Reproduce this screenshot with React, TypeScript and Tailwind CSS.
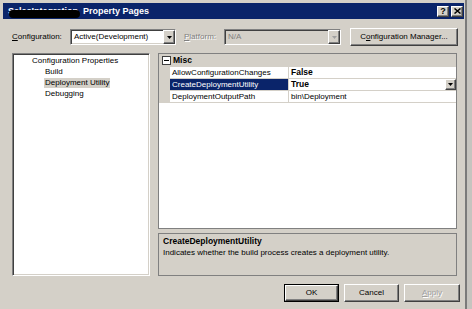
import React from 'react';

// Windows classic 3D borders
const raised =
  'bg-[#d4d0c8] border border-t-white border-l-white border-r-[#404040] border-b-[#404040] shadow-[inset_-1px_-1px_0_#808080]';
const sunken =
  'border border-t-[#808080] border-l-[#808080] border-r-white border-b-white shadow-[inset_1px_1px_0_#404040,inset_-1px_-1px_0_#d4d0c8]';

function Arrow({ color = '#000' }: { color?: string }) {
  return (
    <svg width="5" height="3" viewBox="0 0 5 3">
      <path d="M0 0h5L2.5 3z" fill={color} />
    </svg>
  );
}

function Combo({
  width,
  value,
  disabled,
}: {
  width: string;
  value: string;
  disabled?: boolean;
}) {
  return (
    <div
      className={`${width} h-[16px] flex items-stretch ${sunken} ${
        disabled ? 'bg-[#d4d0c8] text-[#808080]' : 'bg-white'
      }`}
    >
      <div className="flex-1 pl-[3px] flex items-center leading-none">{value}</div>
      <div className={`w-[12px] flex items-center justify-center ${raised}`}>
        <Arrow color={disabled ? '#a0a0a0' : '#000'} />
      </div>
    </div>
  );
}

function Button({
  width,
  children,
  isDefault,
  disabled,
}: {
  width: string;
  children: React.ReactNode;
  isDefault?: boolean;
  disabled?: boolean;
}) {
  const inner = (
    <div
      className={`h-full w-full flex items-center justify-center ${raised} ${
        disabled ? 'text-[#a0a0a0] [text-shadow:1px_1px_0_#fff]' : ''
      }`}
    >
      {children}
    </div>
  );
  if (isDefault) {
    return <div className={`${width} h-[18px] border border-black`}>{inner}</div>;
  }
  return <div className={`${width} h-[18px]`}>{inner}</div>;
}

function PropRow({
  name,
  value,
  bold,
  selected,
}: {
  name: string;
  value: string;
  bold?: boolean;
  selected?: boolean;
}) {
  return (
    <div className="h-[12px] flex border-b border-b-[#d4d0c8]">
      <div className="w-[11px] bg-[#d4d0c8]" />
      <div
        className={`w-[119px] pl-[2px] flex items-center border-r border-r-[#d4d0c8] ${
          selected ? 'bg-[#0a246a] text-white' : ''
        }`}
      >
        {name}
      </div>
      <div className="flex-1 flex items-center pl-[2px]">
        <span className={`flex-1 ${bold ? 'font-bold text-[8.5px]' : ''}`}>{value}</span>
        {selected && (
          <div className={`w-[11px] h-[11px] flex items-center justify-center ${raised}`}>
            <Arrow />
          </div>
        )}
      </div>
    </div>
  );
}

export default function App() {
  return (
    <div className="w-[472px] h-[309px] overflow-hidden bg-[#c6c4bf] font-['Liberation_Sans',Arial,sans-serif] text-[8px] text-black">
      <div className="w-[467px] h-[309px] bg-[#d4d0c8] border-r-2 border-r-[#7a7a7a] pt-[3px] pl-[3px] pr-[1px] flex flex-col">
        {/* 타이틀 바 */}
        <div className="h-[16px] bg-[#0a246a] flex items-center pl-[5px] pr-[1px]">
          <div className="flex-1 text-white font-bold text-[9px] leading-none flex items-center">
            <span className="relative pr-[5px]">
              SalesIntegration
              <span className="absolute left-[1px] right-[3px] top-[3px] bottom-[-2px] bg-black rounded-full" />
            </span>
            <span>Property Pages</span>
          </div>
          <div className="flex gap-[2px]">
            <div className={`w-[12px] h-[11px] flex items-center justify-center font-bold text-[9px] leading-none ${raised}`}>
              ?
            </div>
            <div className={`w-[12px] h-[11px] flex items-center justify-center ${raised}`}>
              <svg width="7" height="6" viewBox="0 0 7 6">
                <path d="M0.5 0.5l6 5M6.5 0.5l-6 5" stroke="#000" strokeWidth="1.5" />
              </svg>
            </div>
          </div>
        </div>

        <div className="pl-[9px]">
          {/* 구성 선택 */}
          <div className="mt-[9px] h-[18px] flex items-center">
            <div className="w-[58px]">
              <span className="underline">C</span>onfiguration:
            </div>
            <Combo width="w-[106px]" value="Active(Development)" />
            <div className="ml-[8px] w-[40px] text-[#808080] [text-shadow:1px_1px_0_#fff]">
              <span className="underline">P</span>latform:
            </div>
            <Combo width="w-[117px]" value="N/A" disabled />
            <div className="ml-[9px]">
              <Button width="w-[108px]">
                C<span className="underline">o</span>nfiguration Manager...
              </Button>
            </div>
          </div>

          {/* 패널 */}
          <div className="mt-[7px] flex gap-[8px]">
            <div className={`w-[138px] h-[223px] bg-white pt-[1px] ${sunken}`}>
              <div className="h-[11px] flex items-center ml-[19px]">Configuration Properties</div>
              <div className="h-[11px] flex items-center ml-[32px]">Build</div>
              <div className="h-[11px] flex items-center ml-[31px]">
                <span className="bg-[#d4d0c8] px-[1px] leading-[10px]">Deployment Utility</span>
              </div>
              <div className="h-[11px] flex items-center ml-[32px]">Debugging</div>
            </div>

            <div className="w-[299px] flex flex-col gap-[4px]">
              <div className="h-[176px] bg-white border border-[#808080]">
                <div className="h-[13px] bg-[#d4d0c8] flex items-center pl-[3px]">
                  <div className="w-[9px] h-[9px] border border-[#404040] bg-white flex items-center justify-center">
                    <div className="w-[5px] h-px bg-black" />
                  </div>
                  <span className="ml-[2px] font-bold text-[8.5px]">Misc</span>
                </div>
                <PropRow name="AllowConfigurationChanges" value="False" bold />
                <PropRow name="CreateDeploymentUtility" value="True" bold selected />
                <PropRow name="DeploymentOutputPath" value="bin\Deployment" />
              </div>
              <div className="h-[43px] border border-[#808080] pl-[4px] pt-[1px]">
                <div className="leading-[12px] font-bold text-[8.5px]">CreateDeploymentUtility</div>
                <div className="leading-[12px]">Indicates whether the build process creates a deployment utility.</div>
              </div>
            </div>
          </div>

          {/* 버튼 */}
          <div className="mt-[8px] w-[448px] flex justify-end gap-[5px]">
            <Button width="w-[55px]" isDefault>
              OK
            </Button>
            <Button width="w-[55px]">Cancel</Button>
            <Button width="w-[56px]" disabled>
              <span className="underline">A</span>pply
            </Button>
          </div>
        </div>
      </div>
    </div>
  );
}
